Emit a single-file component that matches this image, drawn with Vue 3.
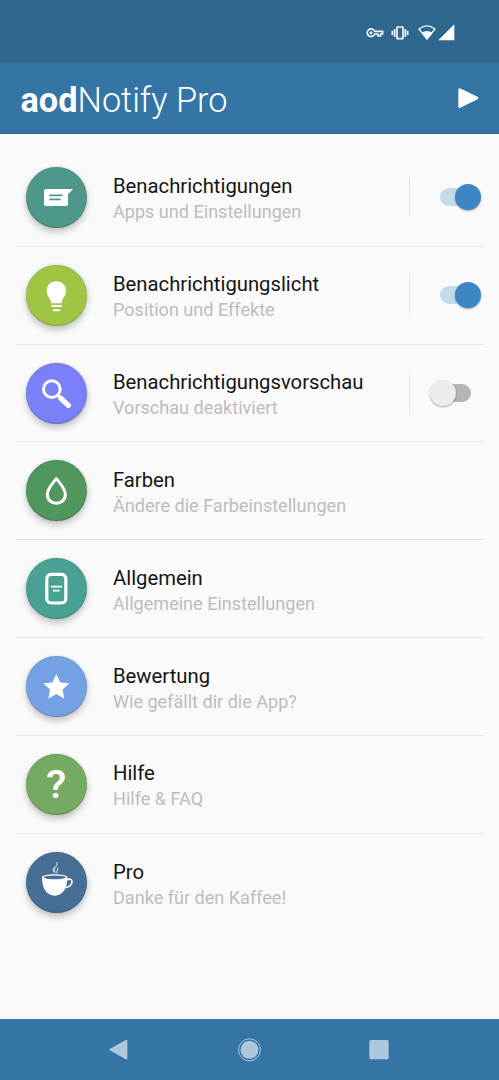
<script setup>
import { ref } from 'vue'

const items = ref([
  { icon: 'message', color: '#4d9888', title: 'Benachrichtigungen', text: 'Apps und Einstellungen', enabled: true },
  { icon: 'bulb', color: '#9ec644', title: 'Benachrichtigungslicht', text: 'Position und Effekte', enabled: true },
  { icon: 'search', color: '#7a80f8', title: 'Benachrichtigungsvorschau', text: 'Vorschau deaktiviert', enabled: false },
  { icon: 'drop', color: '#50965d', title: 'Farben', text: 'Ändere die Farbeinstellungen' },
  { icon: 'device', color: '#48a192', title: 'Allgemein', text: 'Allgemeine Einstellungen' },
  { icon: 'star', color: '#74a1e4', title: 'Bewertung', text: 'Wie gefällt dir die App?' },
  { icon: 'help', color: '#74aa62', title: 'Hilfe', text: 'Hilfe & FAQ' },
  { icon: 'coffee', color: '#476f95', title: 'Pro', text: 'Danke für den Kaffee!' }
])
</script>

<template>
  <div class="screen">
    <div class="status-bar">
      <svg class="status-icons" width="92" height="20" viewBox="0 0 276 60">
        <g fill="none" stroke="#f4f8fa" stroke-width="5">
          <path d="M26 28 A11.500 11.500 0 1 0 26 36 H36 V42 H44 V36 H50 V28 Z" stroke-linejoin="round" />
          <rect x="93" y="15" width="18" height="35" rx="1" />
          <path d="M86 21 V45 M79 26 V40 M118 21 V45 M125 26 V40" stroke-width="5" />
          <path d="M159 21 Q183 2 207 21 L183 51 Z" stroke-width="4" stroke-linejoin="round" />
        </g>
        <circle cx="15" cy="32" r="4.500" fill="#f4f8fa" />
        <path d="M167 32 Q183 22 199 32 L183 53 Z" fill="#fff" />
        <path d="M217 55 L265 7 V55 Z" fill="#fff" />
      </svg>
    </div>

    <header class="app-bar">
      <h1><b>aod</b>Notify Pro</h1>
      <svg class="play" width="22" height="22" viewBox="0 0 66 66">
        <path d="M8 8 L60 33 L8 59 Z" fill="#fff" stroke="#fff" stroke-width="8" stroke-linejoin="round" />
      </svg>
    </header>

    <main class="list">
      <div v-for="item in items" :key="item.icon" class="row">
        <div class="badge" :style="{ backgroundColor: item.color }">
          <span v-if="item.icon === 'help'" class="question">?</span>
          <svg v-else width="61" height="61" viewBox="0 0 183 183">
            <template v-if="item.icon === 'message'">
              <path d="M60 66 H141 L126 82 V111 Q126 117 120 117 H60 Q54 117 54 111 V72 Q54 66 60 66 Z" fill="#fff" />
              <path d="M70 85 H110 M70 97 H104" :stroke="item.color" stroke-width="5" />
            </template>
            <template v-else-if="item.icon === 'bulb'">
              <path d="M91 49 C74 49 62 61 62 77 C62 96 75 98 75 113 Q75 115 78 115 H104 Q107 115 107 113 C107 98 120 96 120 77 C120 61 108 49 91 49 Z" fill="#fff" />
              <path d="M78 123 H105 M83 135.500 H100" stroke="#fff" stroke-width="6" stroke-linecap="round" />
            </template>
            <template v-else-if="item.icon === 'search'">
              <circle cx="77.500" cy="78.500" r="25" fill="none" stroke="#fff" stroke-width="9" />
              <path d="M95 96 L105 106" stroke="#fff" stroke-width="9" />
              <path d="M105 106 L127 127" stroke="#fff" stroke-width="16" stroke-linecap="round" />
            </template>
            <path
              v-else-if="item.icon === 'drop'"
              d="M91 56 C82 67 64 86 64 103 C64 120 76 130 91 130 C106 130 118 120 118 103 C118 86 100 67 91 56 Z"
              fill="none" stroke="#fff" stroke-width="9" stroke-linejoin="round"
            />
            <g v-else-if="item.icon === 'device'" fill="none" stroke="#fff">
              <rect x="62.500" y="49" width="57" height="86" rx="13" stroke-width="9.500" />
              <path d="M75 86 H108 M81 98 H101" stroke-width="5.500" />
            </g>
            <path
              v-else-if="item.icon === 'star'"
              d="M91 54 L103 79.500 L130 82 L110 100.500 L115 128 L91 114 L67 128 L72 100.500 L52 82 L79 79.500 Z"
              fill="#fff"
            />
            <g v-else>
              <path d="M48 76 C48 64 124 64 124 76 C124 110 110 131 86 131 C62 131 48 110 48 76 Z" fill="#fff" />
              <ellipse cx="86" cy="76" rx="33" ry="5.500" :fill="item.color" />
              <path d="M121 84 C131 79 138 82 138 89 C138 99 128 107 115 107" fill="none" stroke="#fff" stroke-width="5" />
              <path d="M92 30 C96 44 79 46 88 62 M96 46 C97 53 91 54 93 64 M84 46 C81 52 80 56 85 62" fill="none" stroke="#fff" stroke-width="2.500" />
            </g>
          </svg>
        </div>
        <div class="label">
          <div class="title">{{ item.title }}</div>
          <div class="text">{{ item.text }}</div>
        </div>
        <div v-if="item.enabled !== undefined" class="toggle" @click="item.enabled = !item.enabled">
          <div class="switch" :class="{ on: item.enabled }">
            <span class="thumb"></span>
          </div>
        </div>
      </div>
    </main>

    <nav class="nav-bar">
      <svg width="24" height="24" viewBox="0 0 72 72">
        <path d="M9 35 L59 7 V63 Z" fill="#adc8dc" stroke="#adc8dc" stroke-width="4" stroke-linejoin="round" />
      </svg>
      <svg width="24" height="24" viewBox="0 0 72 72">
        <circle cx="37.500" cy="35.500" r="33" fill="none" stroke="#adc8dc" stroke-width="3" />
        <circle cx="37.500" cy="35.500" r="27" fill="#adc8dc" />
      </svg>
      <svg width="24" height="24" viewBox="0 0 72 72">
        <rect x="7" y="6" width="58" height="58" rx="5" fill="#adc8dc" />
      </svg>
    </nav>
  </div>
</template>

<style>
body {
  margin: 0;
  background: #fafafa;
}
</style>

<style scoped>
.screen {
  display: flex;
  flex-direction: column;
  height: 1080px;
  overflow: hidden;
  background: #fafafa;
  font-family: Roboto, sans-serif;
}

svg {
  display: block;
}

.status-bar {
  flex: none;
  display: flex;
  justify-content: flex-end;
  box-sizing: border-box;
  height: 63px;
  padding: 22px 41px 0 0;
  background: #2f678e;
}

.app-bar {
  flex: none;
  display: flex;
  align-items: center;
  justify-content: space-between;
  box-sizing: border-box;
  height: 71px;
  padding: 1px 20px 0 20.5px;
  background: #3575a6;
  border-bottom: 1px solid #2f6d9c;
}

.app-bar h1 {
  margin: 2px 0 0;
  color: #fff;
  font-size: 34.3px;
  font-weight: 300;
  line-height: 40px;
  white-space: nowrap;
}

.app-bar b {
  font-weight: 700;
}

.play {
  margin-bottom: 2px;
}

.list {
  flex: 1;
  padding: 14.9px 15.5px 0 16px;
}

.row {
  display: flex;
  align-items: center;
  box-sizing: border-box;
  height: 97.87px;
  padding-left: 10px;
  border-bottom: 1px solid #e6e6e6;
}

.row:last-child {
  border-bottom: none;
}

.badge {
  flex: none;
  display: flex;
  align-items: center;
  justify-content: center;
  width: 61px;
  height: 61px;
  border-radius: 50%;
  box-shadow: 0 4px 7px rgba(0, 0, 0, 0.22), 0 0 3px rgba(0, 0, 0, 0.12),
    inset 0 -1px 1px rgba(0, 0, 0, 0.18), inset 0 1px 1px rgba(0, 0, 0, 0.07);
}

.question {
  padding-top: 2px;
  color: #fff;
  font-size: 38px;
  font-weight: 500;
  line-height: 59px;
  transform: scaleX(1.1);
}

.label {
  flex: 1;
  padding: 3px 0 0 26px;
  white-space: nowrap;
}

.title {
  color: #151515;
  font-size: 20.25px;
  line-height: 26px;
}

.text {
  color: #bdbdbd;
  font-size: 18.07px;
  line-height: 25px;
}

.toggle {
  display: flex;
  align-items: center;
  justify-content: flex-end;
  box-sizing: border-box;
  width: 72px;
  height: 40px;
  margin-right: 2.5px;
  border-left: 1px solid #e6e6e6;
}

.switch {
  position: relative;
  width: 31px;
  height: 18px;
  margin-right: 10.5px;
  border-radius: 9px;
  background: #b5b5b5;
}

.thumb {
  position: absolute;
  top: -4px;
  left: -10px;
  width: 26px;
  height: 26px;
  border-radius: 50%;
  background: #ececec;
  box-shadow: 0 1px 2px rgba(0, 0, 0, 0.35);
}

.switch.on {
  background: #c1dbeb;
}

.switch.on .thumb {
  left: 15px;
  background: #3c86c4;
}

.nav-bar {
  flex: none;
  display: flex;
  align-items: center;
  justify-content: space-between;
  box-sizing: border-box;
  height: 61px;
  padding: 0 108px 0 107px;
  background: #3575a6;
}
</style>
